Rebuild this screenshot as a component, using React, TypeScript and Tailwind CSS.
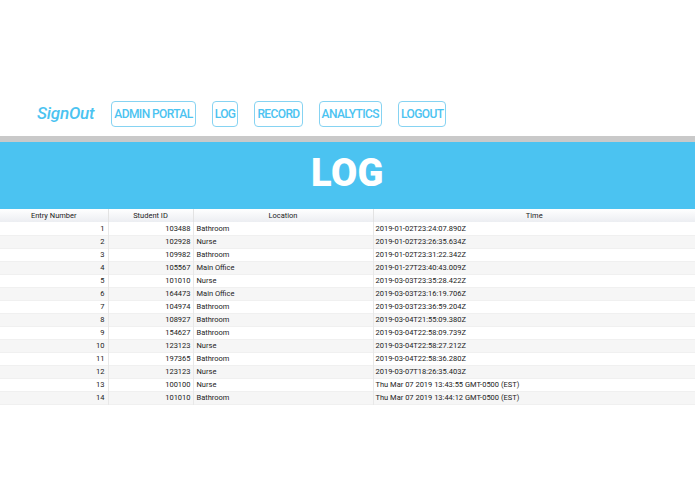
import React from 'react';

const rows = [
  [1, 103488, 'Bathroom', '2019-01-02T23:24:07.890Z'],
  [2, 102928, 'Nurse', '2019-01-02T23:26:35.634Z'],
  [3, 109982, 'Bathroom', '2019-01-02T23:31:22.342Z'],
  [4, 105567, 'Main Office', '2019-01-27T23:40:43.009Z'],
  [5, 101010, 'Nurse', '2019-03-03T23:35:28.422Z'],
  [6, 164473, 'Main Office', '2019-03-03T23:16:19.706Z'],
  [7, 104974, 'Bathroom', '2019-03-03T23:36:59.204Z'],
  [8, 108927, 'Bathroom', '2019-03-04T21:55:09.380Z'],
  [9, 154627, 'Bathroom', '2019-03-04T22:58:09.739Z'],
  [10, 123123, 'Nurse', '2019-03-04T22:58:27.212Z'],
  [11, 197365, 'Bathroom', '2019-03-04T22:58:36.280Z'],
  [12, 123123, 'Nurse', '2019-03-07T18:26:35.403Z'],
  [13, 100100, 'Nurse', 'Thu Mar 07 2019 13:43:55 GMT-0500 (EST)'],
  [14, 101010, 'Bathroom', 'Thu Mar 07 2019 13:44:12 GMT-0500 (EST)'],
];

const navItems = ['ADMIN PORTAL', 'LOG', 'RECORD', 'ANALYTICS', 'LOGOUT'];

const App = () => {
  return <div className="min-h-screen bg-white font-['Roboto',sans-serif]">
      <nav className="flex items-center pt-[101px] pl-[37px]">
        <span className="text-[17px] italic font-medium text-[#4bc3f1] mr-[17px] tracking-[-0.2px]">SignOut</span>
        <div className="flex gap-[16px]">
          {navItems.map(item => <button key={item} className="h-[26px] px-[2px] border-[1.5px] border-[#86d3f2] rounded-[4px] text-[12px] font-medium text-[#4bc3f1] leading-none tracking-[-0.6px]">
              {item}
            </button>)}
        </div>
      </nav>
      <div className="mt-[9px] h-[6px] bg-[#c9c9c9]" />
      <div className="h-[67px] bg-[#4bc3f1] flex items-center justify-center">
        <h1 className="text-[38px] font-black text-white leading-none tracking-[0.5px] -mt-[6px]">LOG</h1>
      </div>
      <table className="w-full border-collapse text-[7.5px] text-[#222] table-fixed">
        <colgroup>
          <col className="w-[108px]" />
          <col className="w-[85px]" />
          <col className="w-[180px]" />
          <col />
        </colgroup>
        <thead>
          <tr className="h-[13px] bg-gradient-to-b from-white to-[#eceef2]">
            {['Entry Number', 'Student ID', 'Location', 'Time'].map(h => <th key={h} className="font-normal text-center border-r border-[#e3e3e3] last:border-r-0 leading-none">
                {h}
              </th>)}
          </tr>
        </thead>
        <tbody>
          {rows.map((r, i) => <tr key={i} className={`h-[13px] border-b border-[#f0f0f0] ${i % 2 === 1 ? 'bg-[#f6f6f6]' : 'bg-white'}`}>
              <td className="text-right pr-[3px] border-r border-[#e8e8e8] leading-none">{r[0]}</td>
              <td className="text-right pr-[2px] border-r border-[#e8e8e8] leading-none">{r[1]}</td>
              <td className="text-left pl-[3px] border-r border-[#e8e8e8] leading-none">{r[2]}</td>
              <td className="text-left pl-[2px] leading-none">{r[3]}</td>
            </tr>)}
        </tbody>
      </table>
    </div>;
};

export default App;
